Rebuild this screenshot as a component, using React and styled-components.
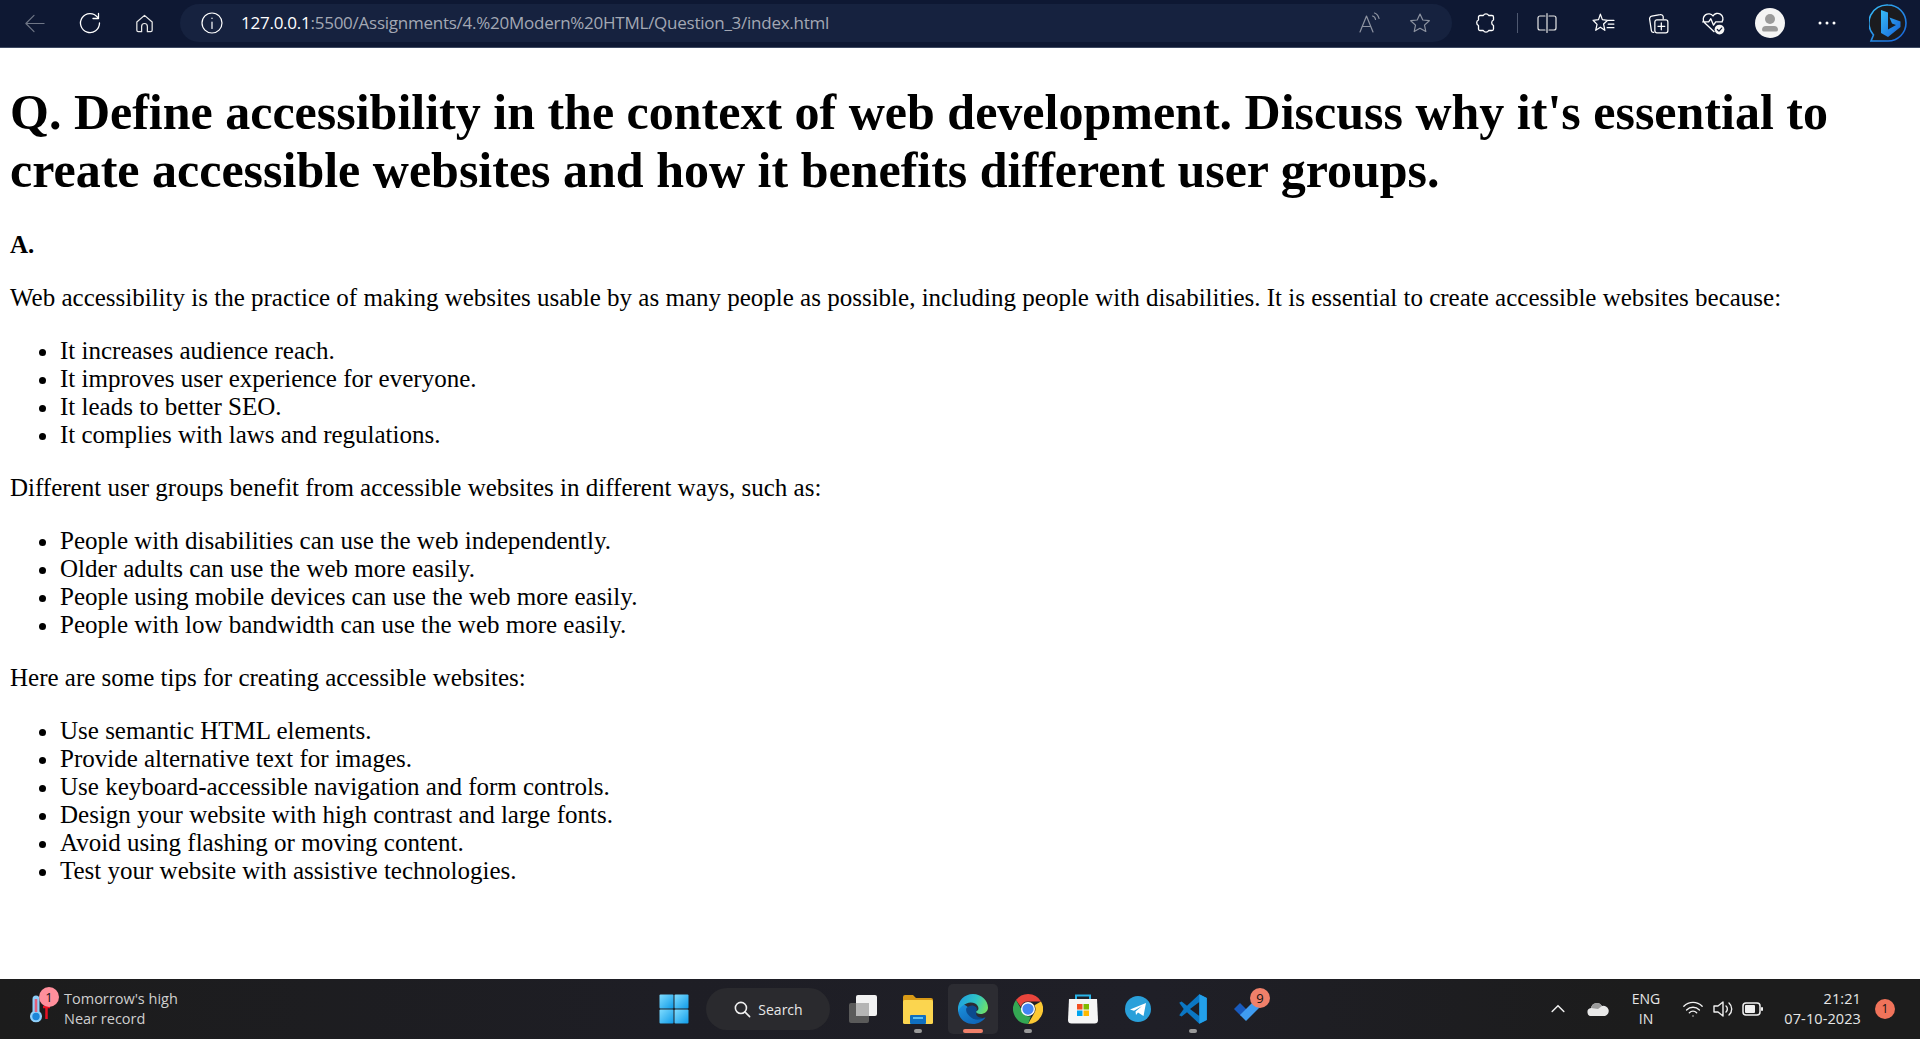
import React from 'react';
import styled, { createGlobalStyle } from 'styled-components';

const GlobalStyle = createGlobalStyle`
  html, body { margin: 0; padding: 0; height: 100%; overflow: hidden; background: #fff; }
  #root { height: 100%; }
`;

const Page = styled.div`
  height: 100vh;
  display: flex;
  flex-direction: column;
`;

/* browser chrome */
const Toolbar = styled.header`
  height: 48px;
  box-sizing: border-box;
  flex: none;
  display: flex;
  align-items: center;
  padding: 0 0 1px 7px;
  background: #0e1833;
  border-bottom: 1px solid #3e4a63;
`;

const Slot = styled.div`
  width: ${p => p.$w || 55}px;
  height: 100%;
  flex: none;
  display: flex;
  align-items: center;
  justify-content: center;
`;

const AddressBar = styled.div`
  width: 1272px;
  height: 38px;
  margin-left: 8px;
  margin-right: 6px;
  padding: 0 20px 0 20px;
  box-sizing: border-box;
  flex: none;
  display: flex;
  align-items: center;
  background: #16223f;
  border-radius: 19px;
`;

const Url = styled.div`
  flex: 1;
  margin-left: 17px;
  padding-bottom: 2px;
  font: 17px "Open Sans", sans-serif;
  letter-spacing: -0.25px;
  color: #a3a8b4;
  b { font-weight: 400; color: #fff; }
`;

const BarEnd = styled.div`
  display: flex;
  align-items: center;
  gap: 27px;
`;

const Divider = styled.div`
  width: 1px;
  height: 20px;
  flex: none;
  margin: 0 2px 0 3px;
  background: #4e5870;
`;

/* page text */
const Main = styled.main`
  flex: 1;
  min-height: 0;
  padding: 0 10px;
  font: 25px/28px "Liberation Serif", serif;
  color: #000;
`;

const Question = styled.h1`
  margin: 35px 0 32px;
  font-size: 50px;
  line-height: 58px;
  font-weight: 700;
`;

const Answer = styled.h3`
  margin: 0 0 25px;
  font-size: 25px;
  line-height: 28px;
  font-weight: 700;
`;

const Para = styled.p`
  margin: 25px 0;
`;

const List = styled.ul`
  margin: 25px 0;
  padding-left: 50px;
`;

/* windows taskbar */
const Taskbar = styled.footer`
  height: 60px;
  flex: none;
  display: grid;
  grid-template-columns: 646px auto 1fr;
  align-items: center;
  background: linear-gradient(90deg, #1c1c1c 0%, #1e1e25 35%, #1f1f27 60%, #1c1c1c 85%);
  color: #e6e6e6;
  font-family: "Open Sans", sans-serif;
`;

const Weather = styled.div`
  display: flex;
  align-items: center;
  padding-left: 26px;
`;

const ThermoWrap = styled.div`
  position: relative;
  width: 38px;
  height: 44px;
`;

const ThermoGlyph = styled.svg`
  position: absolute;
  left: 4px;
  top: 8px;
`;

const Badge = styled.span`
  position: absolute;
  top: ${p => p.$top}px;
  left: ${p => p.$left}px;
  width: ${p => p.$size}px;
  height: ${p => p.$size}px;
  border-radius: 50%;
  background: ${p => p.$bg};
  color: #111;
  font: 13px/${p => p.$size}px "Open Sans", sans-serif;
  text-align: center;
`;

const WeatherText = styled.div`
  font-size: 14.5px;
  line-height: 20px;
  color: #cfcfcf;
`;

const Center = styled.div`
  display: flex;
  align-items: center;
  height: 100%;
`;

const SearchPill = styled.div`
  width: 124px;
  height: 42px;
  margin: 0 5px;
  flex: none;
  display: flex;
  align-items: center;
  justify-content: center;
  gap: 6px;
  border-radius: 21px;
  background: #2a2a2e;
  font-size: 14px;
  color: #e8e8e8;
`;

const AppSlot = styled.div`
  position: relative;
  width: 55px;
  height: 100%;
  flex: none;
  display: flex;
  align-items: center;
  justify-content: center;
`;

const ActiveTile = styled.div`
  position: absolute;
  top: 5px;
  left: 3px;
  width: 50px;
  height: 50px;
  border-radius: 5px;
  background: #2c2c32;
`;

const AppIcon = styled.div`
  position: relative;
  display: flex;
`;

const RunDot = styled.span`
  position: absolute;
  bottom: 6px;
  left: 50%;
  transform: translateX(-50%);
  width: ${p => (p.$active ? 20 : 8)}px;
  height: 4px;
  border-radius: 2px;
  background: ${p => (p.$active ? '#f0806a' : '#9a9a9a')};
`;

const Tray = styled.div`
  display: flex;
  align-items: center;
  justify-content: flex-end;
  height: 100%;
  padding-right: 25px;
`;

const Lang = styled.div`
  width: 56px;
  margin-right: 4px;
  text-align: center;
  font-size: 14px;
  line-height: 20px;
`;

const Clock = styled.div`
  width: 93px;
  text-align: right;
  font-size: 14.5px;
  letter-spacing: 0.1px;
  line-height: 20px;
  margin-right: 14px;
`;

const NotifyDot = styled.div`
  width: 20px;
  height: 20px;
  border-radius: 50%;
  background: #f0735a;
  color: #111;
  font-size: 12px;
  line-height: 20px;
  text-align: center;
`;

const Stroke = ({ size = 22, color = '#fff', width = 1.4, children }) => (
  <svg width={size} height={size} viewBox="0 0 24 24" fill="none" stroke={color} strokeWidth={width} strokeLinecap="round" strokeLinejoin="round">
    {children}
  </svg>
);

const Bing = () => (
  <svg width="38" height="38" viewBox="0 0 38 38">
    <defs>
      <linearGradient id="bingB" x1="0" y1="0" x2="1" y2="1">
        <stop offset="0" stopColor="#37bdf8" />
        <stop offset="1" stopColor="#1560d8" />
      </linearGradient>
    </defs>
    <path d="M19 1a18 18 0 0 1 0 36H2l2.500-6A18 18 0 0 1 19 1z" fill="#1b1b1f" stroke="url(#bingB)" strokeWidth="1.600" />
    <path d="M12 6l7 2.500v17l8-4.500-4-1.500-2.500-6 11 4v5.500L19 33l-7-4z" fill="url(#bingB)" />
  </svg>
);

const Windows = () => (
  <svg width="30" height="30" viewBox="0 0 30 30">
    <defs>
      <linearGradient id="winG" x1="0" y1="0" x2="1" y2="1">
        <stop offset="0" stopColor="#7fdcff" />
        <stop offset="1" stopColor="#0f9be8" />
      </linearGradient>
    </defs>
    <rect x="0.5" y="0.5" width="14" height="14" rx="1" fill="url(#winG)" />
    <rect x="15.5" y="0.5" width="14" height="14" rx="1" fill="url(#winG)" />
    <rect x="0.5" y="15.5" width="14" height="14" rx="1" fill="url(#winG)" />
    <rect x="15.5" y="15.5" width="14" height="14" rx="1" fill="url(#winG)" />
  </svg>
);

const TaskView = () => (
  <svg width="30" height="32" viewBox="0 0 30 32">
    <rect x="1" y="10" width="20" height="20" rx="2" fill="#5a5a5a" />
    <rect x="8" y="2" width="21" height="21" rx="2" fill="#f2f2f2" />
    <rect x="8" y="10" width="13" height="13" fill="#b5b5b5" />
  </svg>
);

const Explorer = () => (
  <svg width="32" height="30" viewBox="0 0 32 30">
    <path d="M1 3a2 2 0 0 1 2-2h8l3 3h15a2 2 0 0 1 2 2v4H1z" fill="#d99a16" />
    <rect x="1" y="6" width="30" height="24" rx="1.5" fill="#fbd54f" />
    <rect x="8" y="21" width="16" height="9" rx="1" fill="#0f6fc0" />
    <rect x="11" y="23" width="10" height="2" fill="#5cc0f2" />
  </svg>
);

const Edge = () => (
  <svg width="30" height="30" viewBox="0 0 30 30">
    <defs>
      <linearGradient id="edgeTop" x1="0" y1="0.3" x2="1" y2="0.6">
        <stop offset="0" stopColor="#1f9fe0" />
        <stop offset="0.55" stopColor="#2fc4c4" />
        <stop offset="1" stopColor="#6ee06a" />
      </linearGradient>
      <linearGradient id="edgeLow" x1="0" y1="0" x2="0.6" y2="1">
        <stop offset="0" stopColor="#1c95e0" />
        <stop offset="1" stopColor="#0f66b8" />
      </linearGradient>
    </defs>
    <path d="M0 15C0 24 6.500 30 15 30c5 0 9.500-2.500 12.500-6.500-4 1.500-9 1.500-12-.5-3-2-3.500-5-2-7.500L4 9C1.500 10.500 0 12.500 0 15z" fill="url(#edgeLow)" />
    <path d="M13 16c-2 3-1 6.500 2 8.500 3 1.500 8 1.500 12-1-2 1-6 .5-8-1.500-1-1-1-2-.5-2.500L16 14z" fill="#0c4a8e" />
    <path d="M0 15C0 6.500 6.500 0 15 0c8.500 0 15 6.500 15 13.500 0 4-3.500 6.500-7.500 6.500-2.500 0-4.500-1-4.500-2.500 2.500-1 3-3 2-5C18.500 9 13 7.500 8.500 9.500 4 11.500 1 14 0 18z" fill="url(#edgeTop)" />
    <path d="M8.500 14c2.500-3 7-3.500 9.500-1 1.500 1.500 1 4-.5 5-1.500 1.500-1.500 3-.5 4 1.500 1.500 4 2 7 1.500-3 2-7 2.500-10 .5-4-2.500-7-6-5.500-10z" fill="#0c4a8e" />
  </svg>
);

const Chrome = () => (
  <svg width="30" height="30" viewBox="0 0 32 32">
    <path d="M16 0a16 16 0 0 1 13.900 8H16a8 8 0 0 0-7.700 5.700L3.200 6.500A16 16 0 0 1 16 0z" fill="#e8453c" />
    <path d="M29.900 8A16 16 0 0 1 16 32l6.900-12A8 8 0 0 0 22.900 12L29.900 8z" fill="#fcc934" />
    <path d="M16 32A16 16 0 0 1 3.200 6.500l6.900 12a8 8 0 0 0 9 5.500z" fill="#34a853" />
    <circle cx="16" cy="16" r="7.500" fill="#fff" />
    <circle cx="16" cy="16" r="6" fill="#4285f4" />
  </svg>
);

const Store = () => (
  <svg width="30" height="30" viewBox="0 0 30 30">
    <path d="M8 6V1.500h14V6" fill="none" stroke="#28b4e8" strokeWidth="2" />
    <path d="M1 5h28l1 21a3.500 3.500 0 0 1-3.500 3.500h-23A3.500 3.500 0 0 1 0 26z" fill="#f6f6f6" />
    <rect x="9" y="10" width="5.500" height="5.500" fill="#f25022" />
    <rect x="15.500" y="10" width="5.500" height="5.500" fill="#7fba00" />
    <rect x="9" y="16.500" width="5.500" height="5.500" fill="#00a4ef" />
    <rect x="15.500" y="16.500" width="5.500" height="5.500" fill="#ffb900" />
  </svg>
);

const Telegram = () => (
  <svg width="26" height="26" viewBox="0 0 26 26">
    <circle cx="13" cy="13" r="13" fill="#2aa0da" />
    <path d="M5 13.500L21 7l-2.500 13-5.500-3.500-2 2.500-.5-3.500 6.500-5.500-8 4.800z" fill="#fff" />
  </svg>
);

const VsCode = () => (
  <svg width="30" height="30" viewBox="0 0 100 100">
    <path fillRule="evenodd" d="M71 1L30 39 12 25 4 29l15 21L4 71l8 4 18-14 41 38 25-12V13zM71 27v46L40 50z" fill="#0b77c4" />
    <path fillRule="evenodd" d="M71 1l25 12v74L71 99V73 27z" fill="#23a0ea" />
  </svg>
);

const Todo = () => (
  <svg width="28" height="24" viewBox="0 0 28 24">
    <path d="M0 12l6-6 7 7-6 6z" fill="#185abd" />
    <path d="M6 18L20 4l7 5-15 15z" fill="#3f9cf0" />
  </svg>
);

const Thermo = () => (
  <ThermoGlyph width="24" height="28" viewBox="0 0 24 28">
    <path d="M2.500 4a3.500 3.500 0 0 1 7 0v12.500a6 6 0 1 1-7 0z" fill="#8fd0fa" />
    <rect x="4.700" y="4" width="2.600" height="13" fill="#e0607a" />
    <circle cx="6" cy="21.500" r="3.700" fill="#1c86d8" />
    <path d="M13 12h7M16.500 12v12" stroke="#e81123" strokeWidth="2.500" fill="none" />
  </ThermoGlyph>
);

const answerTips = [
  'It increases audience reach.',
  'It improves user experience for everyone.',
  'It leads to better SEO.',
  'It complies with laws and regulations.',
];

const groups = [
  'People with disabilities can use the web independently.',
  'Older adults can use the web more easily.',
  'People using mobile devices can use the web more easily.',
  'People with low bandwidth can use the web more easily.',
];

const tips = [
  'Use semantic HTML elements.',
  'Provide alternative text for images.',
  'Use keyboard-accessible navigation and form controls.',
  'Design your website with high contrast and large fonts.',
  'Avoid using flashing or moving content.',
  'Test your website with assistive technologies.',
];

const apps = [
  { key: 'task', icon: <TaskView /> },
  { key: 'files', icon: <Explorer />, dot: true },
  { key: 'edge', icon: <Edge />, active: true },
  { key: 'chrome', icon: <Chrome />, dot: true },
  { key: 'store', icon: <Store /> },
  { key: 'telegram', icon: <Telegram /> },
  { key: 'code', icon: <VsCode />, dot: true },
  { key: 'todo', icon: <Todo />, count: '9' },
];

function App() {
  return (
    <Page>
      <GlobalStyle />
      <Toolbar>
        <Slot>
          <Stroke size={23} color="#6f7686" width={1.2}><path d="M22 12H3M11.500 3.500L3 12l8.500 8.500" /></Stroke>
        </Slot>
        <Slot>
          <Stroke size={24} width={1.3}><path d="M21.500 12a9.500 9.500 0 1 1-2-5.800M20.500 2.500v5H15" /></Stroke>
        </Slot>
        <Slot>
          <Stroke size={23} width={1.3} color="#e8e8e8"><path d="M12 3.500L4 10.500V19a1.500 1.500 0 0 0 1.500 1.500H9V15a3 3 0 0 1 6 0v5.500h3.500A1.500 1.500 0 0 0 20 19v-8.500z" /></Stroke>
        </Slot>
        <AddressBar>
          <Stroke size={24} width={1.2}>
            <circle cx="12" cy="12" r="10" />
            <path d="M12 11v6.500M12 7v.4" />
          </Stroke>
          <Url><b>127.0.0.1</b>:5500/Assignments/4.%20Modern%20HTML/Question_3/index.html</Url>
          <BarEnd>
            <Stroke size={24} color="#8d93a1" width={1.2}><path d="M3 21l6.500-16L16 21M5.500 15.500h8M15.500 5a4 4 0 0 1 3 3.500M17.500 2a7.500 7.500 0 0 1 4.500 5.500" /></Stroke>
            <Stroke size={24} color="#8d93a1" width={1.2}><path d="M12 3l2.800 6 6.500.7-4.800 4.400 1.300 6.400L12 17.300 6.200 20.500l1.300-6.400L2.700 9.700 9.200 9z" /></Stroke>
          </BarEnd>
        </AddressBar>
        <Slot $w={56}>
          <Stroke size={24} width={1.3}><path d="M9.300 4.500a3 3 0 0 1 5.400 0h3.300a1.500 1.500 0 0 1 1.500 1.500v3a3 3 0 0 0 0 5.500V18a1.500 1.500 0 0 1-1.500 1.500h-3.300a3 3 0 0 1-5.400 0H6A1.500 1.500 0 0 1 4.500 18v-3.500a3 3 0 0 1 0-5.500V6A1.500 1.500 0 0 1 6 4.500z" /></Stroke>
        </Slot>
        <Divider />
        <Slot $w={54}>
          <Stroke size={24} width={1.2} color="#e8e8e8"><path d="M12 2.500v19M10 5H5a2 2 0 0 0-2 2v10a2 2 0 0 0 2 2h5M14 5h5a2 2 0 0 1 2 2v10a2 2 0 0 1-2 2h-5" /></Stroke>
        </Slot>
        <Slot $w={58}>
          <Stroke size={25} width={1.2}><path d="M9 3l1.900 5.300 5.100.6-3.900 3.600 1.200 6-4.300-3-4.500 3 1.300-5.600L2 8.900l5.200-.6zM16.500 9H22M16.500 12.500H22M15.500 16H22" /></Stroke>
        </Slot>
        <Slot $w={52}>
          <Stroke size={25} width={1.2}><path d="M7.500 20.500h-.3a2 2 0 0 1-2-1.500L3.500 8a2.500 2.500 0 0 1 2-3l8-1.500a2.500 2.500 0 0 1 3 2v2" /><rect x="8.500" y="8.500" width="12.500" height="12.500" rx="2" /><path d="M14.700 11.500v6.500M11.500 14.700H18" /></Stroke>
        </Slot>
        <Slot $w={58}>
          <svg width="26" height="26" viewBox="0 0 24 24" fill="none" stroke="#fff" strokeWidth="1.200" strokeLinecap="round" strokeLinejoin="round">
            <path d="M13 20L4 11.500a4.800 4.800 0 0 1 8-6 4.800 4.800 0 0 1 8.500 5M2.500 11H8l2-3 2.500 6 2-3h6" />
            <circle cx="18" cy="18" r="4.500" fill="#f5f5f5" stroke="none" />
            <path d="M16 18l1.500 1.500 2.500-2.800" stroke="#0e1833" />
          </svg>
        </Slot>
        <Slot $w={56}>
          <svg width="30" height="30" viewBox="0 0 30 30">
            <circle cx="15" cy="15" r="15" fill="#f4f4f4" />
            <circle cx="15" cy="11" r="5" fill="#9a9a9a" />
            <path d="M7 22a4 4 0 0 1 4-4h8a4 4 0 0 1 4 4 2 2 0 0 1-2 1.500H9A2 2 0 0 1 7 22z" fill="#9a9a9a" />
          </svg>
        </Slot>
        <Slot $w={58}>
          <svg width="18" height="4" viewBox="0 0 18 4" fill="#fff">
            <circle cx="2" cy="2" r="1.500" /><circle cx="9" cy="2" r="1.500" /><circle cx="16" cy="2" r="1.500" />
          </svg>
        </Slot>
        <Slot $w={64}><Bing /></Slot>
      </Toolbar>

      <Main>
        <Question>Q. Define accessibility in the context of web development. Discuss why it's essential to create accessible websites and how it benefits different user groups.</Question>
        <Answer>A.</Answer>
        <Para>Web accessibility is the practice of making websites usable by as many people as possible, including people with disabilities. It is essential to create accessible websites because:</Para>
        <List>{answerTips.map(t => <li key={t}>{t}</li>)}</List>
        <Para>Different user groups benefit from accessible websites in different ways, such as:</Para>
        <List>{groups.map(t => <li key={t}>{t}</li>)}</List>
        <Para>Here are some tips for creating accessible websites:</Para>
        <List>{tips.map(t => <li key={t}>{t}</li>)}</List>
      </Main>

      <Taskbar>
        <Weather>
          <ThermoWrap>
            <Thermo />
            <Badge $top={0} $left={13} $size={20} $bg="#ff8f9c">1</Badge>
          </ThermoWrap>
          <WeatherText>Tomorrow's high<br />Near record</WeatherText>
        </Weather>
        <Center>
          <AppSlot><Windows /></AppSlot>
          <SearchPill>
            <Stroke size={19} color="#f0f0f0" width={2}><circle cx="10" cy="10" r="7" /><path d="M15 15l6 6" /></Stroke>
            Search
          </SearchPill>
          {apps.map(app => (
            <AppSlot key={app.key}>
              {app.active && <ActiveTile />}
              <AppIcon>{app.icon}</AppIcon>
              {(app.dot || app.active) && <RunDot $active={app.active} />}
              {app.count && <Badge $top={9} $left={30} $size={20} $bg="#f0806a">{app.count}</Badge>}
            </AppSlot>
          ))}
        </Center>
        <Tray>
          <Slot $w={40}>
            <Stroke size={20} color="#f0f0f0" width={1.800}><path d="M5 15l7-7 7 7" /></Stroke>
          </Slot>
          <Slot $w={40}>
            <svg width="22" height="14" viewBox="0 0 22 14">
              <path d="M5 14a4 4 0 0 1-1-8 6 6 0 0 1 11-2 4.500 4.500 0 0 1 3 10z" fill="#e8e8e8" />
              <path d="M4 6a6 6 0 0 1 11-2l-4 3z" fill="#9b9b9b" />
            </svg>
          </Slot>
          <Lang>ENG<br />IN</Lang>
          <Slot $w={30}>
            <Stroke size={22} color="#f0f0f0" width={1.500}><path d="M2 9a14 14 0 0 1 20 0M5 13a10 10 0 0 1 14 0M8 16a6 6 0 0 1 8 0M12 19.500v.1" /></Stroke>
          </Slot>
          <Slot $w={30}>
            <Stroke size={24} color="#f0f0f0" width={1.400}><path d="M3 9v6h4l5 4V5L7 9zM15 9a4 4 0 0 1 0 6M18 6a8 8 0 0 1 0 12" /></Stroke>
          </Slot>
          <Slot $w={30}>
            <svg width="22" height="14" viewBox="0 0 22 14">
              <rect x="1" y="1" width="17" height="12" rx="3" fill="none" stroke="#f0f0f0" strokeWidth="1.500" />
              <rect x="3" y="3" width="10" height="8" rx="1" fill="#f0f0f0" />
              <rect x="19" y="5" width="2" height="4" rx="1" fill="#f0f0f0" />
            </svg>
          </Slot>
          <Clock>21:21<br />07-10-2023</Clock>
          <NotifyDot>1</NotifyDot>
        </Tray>
      </Taskbar>
    </Page>
  );
}

export default App;
